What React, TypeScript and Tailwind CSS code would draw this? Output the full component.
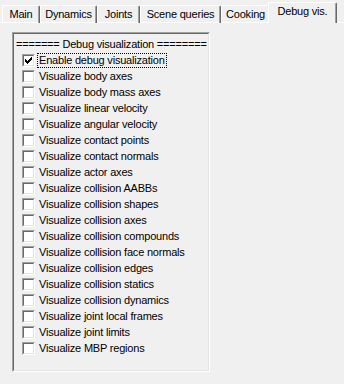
import React from "react";

const tabs = [
  { label: "Main", w: "w-[38px]" },
  { label: "Dynamics", w: "w-[57px]" },
  { label: "Joints", w: "w-[43px]" },
  { label: "Scene queries", w: "w-[81px]" },
  { label: "Cooking", w: "w-[49px]" },
];

const options = [
  "Visualize body axes",
  "Visualize body mass axes",
  "Visualize linear velocity",
  "Visualize angular velocity",
  "Visualize contact points",
  "Visualize contact normals",
  "Visualize actor axes",
  "Visualize collision AABBs",
  "Visualize collision shapes",
  "Visualize collision axes",
  "Visualize collision compounds",
  "Visualize collision face normals",
  "Visualize collision edges",
  "Visualize collision statics",
  "Visualize collision dynamics",
  "Visualize joint local frames",
  "Visualize joint limits",
  "Visualize MBP regions",
];

function CheckBox({ checked }: { checked?: boolean }) {
  return (
    <div className="w-[13px] h-[13px] shrink-0 border border-t-[#a0a0a0] border-l-[#a0a0a0] border-b-white border-r-white">
      <div className="w-full h-full bg-white border border-t-[#696969] border-l-[#696969] border-b-[#e3e3e3] border-r-[#e3e3e3] flex items-center justify-center">
        {checked && (
          <svg width="7" height="7" viewBox="0 0 7 7" shapeRendering="crispEdges">
            <path d="M0 2h1v3h-1zM1 3h1v3h-1zM2 4h1v3h-1zM3 3h1v3h-1zM4 2h1v3h-1zM5 1h1v3h-1zM6 0h1v3h-1z" fill="#000" />
          </svg>
        )}
      </div>
    </div>
  );
}

export default function App() {
  return (
    <div
      className="w-[344px] h-[384px] bg-[#f0f0f0] text-black text-[11px] tracking-[-0.2px] overflow-hidden"
      style={{ fontFamily: '"Liberation Sans", Arial, sans-serif' }}
    >
      {/* Tab strip */}
      <div className="flex items-end h-[23px] pl-[2px] border-b border-white">
        {tabs.map((t) => (
          <div
            key={t.label}
            className={`${t.w} h-[18px] -mb-px flex items-center justify-center border-l border-t border-white border-r border-r-[#696969] shadow-[inset_-1px_0_0_#a0a0a0] rounded-t-[2px]`}
          >
            {t.label}
          </div>
        ))}
        <div className="w-[69px] h-[21px] -ml-[2px] -mb-px flex items-center justify-center bg-[#f0f0f0] border-l border-t border-white border-r border-r-[#696969] shadow-[inset_-1px_0_0_#a0a0a0] rounded-t-[2px] pb-[3px]">
          Debug vis.
        </div>
      </div>

      {/* Page */}
      <div className="pt-[9px] pl-[12px]">
        <div className="w-[198px] h-[340px] border border-t-[#a0a0a0] border-l-[#a0a0a0] border-b-white border-r-white">
          <div className="w-full h-full border border-t-[#696969] border-l-[#696969] border-b-[#e3e3e3] border-r-[#e3e3e3] pl-[2px] pt-[2px]">
            <div className="h-[16px] leading-[16px] whitespace-nowrap">
              ======= Debug visualization ========
            </div>
            <div className="pl-[6px]">
              <div className="h-[16px] flex items-center gap-[4px]">
                <CheckBox checked />
                <span className="outline outline-1 outline-dotted outline-black px-[1px] leading-[13px] -ml-[1px]">
                  Enable debug visualization
                </span>
              </div>
              {options.map((o) => (
                <div key={o} className="h-[16px] flex items-center gap-[4px]">
                  <CheckBox />
                  <span className="leading-[13px]">{o}</span>
                </div>
              ))}
            </div>
          </div>
        </div>
      </div>
    </div>
  );
}
